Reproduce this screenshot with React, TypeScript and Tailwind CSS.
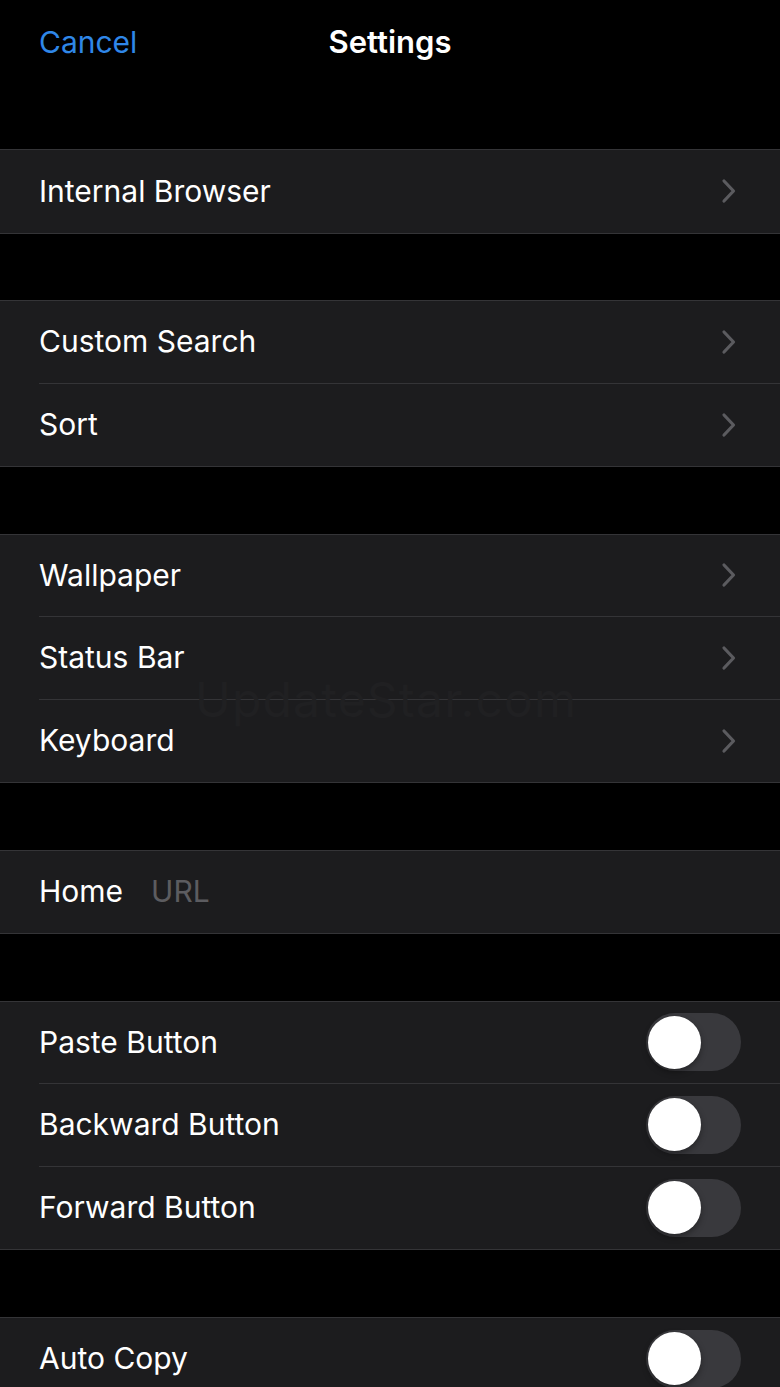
import React from "react";

type Row =
  | { kind: "link"; label: string }
  | { kind: "toggle"; label: string }
  | { kind: "input"; label: string; placeholder: string };

const GROUPS: Row[][] = [
  [{ kind: "link", label: "Internal Browser" }],
  [
    { kind: "link", label: "Custom Search" },
    { kind: "link", label: "Sort" },
  ],
  [
    { kind: "link", label: "Wallpaper" },
    { kind: "link", label: "Status Bar" },
    { kind: "link", label: "Keyboard" },
  ],
  [{ kind: "input", label: "Home", placeholder: "URL" }],
  [
    { kind: "toggle", label: "Paste Button" },
    { kind: "toggle", label: "Backward Button" },
    { kind: "toggle", label: "Forward Button" },
  ],
  [{ kind: "toggle", label: "Auto Copy" }],
];

function Chevron() {
  return (
    <svg width="16" height="26" viewBox="0 0 16 26" fill="none" className="shrink-0">
      <path
        d="M3 3 L12.5 13 L3 23"
        stroke="#5b5b5f"
        strokeWidth="3.2"
        strokeLinecap="round"
        strokeLinejoin="round"
      />
    </svg>
  );
}

function Toggle() {
  return (
    <div className="flex h-[58px] w-[95px] shrink-0 items-center rounded-full bg-[#39393d] pl-[2px]">
      <div className="h-[53px] w-[53px] rounded-full bg-white shadow-[0_3px_6px_rgba(0,0,0,0.35)]" />
    </div>
  );
}

function SettingsRow({ row, last }: { row: Row; last: boolean }) {
  return (
    <div className="flex h-[82.5px] pl-[39px]">
      <div
        className={
          "flex flex-1 items-center pr-[39px] " + (last ? "" : "border-b border-[#343437]")
        }
      >
        <span className="text-[30px] text-white">{row.label}</span>
        {row.kind === "input" && (
          <span className="ml-[28px] text-[30px] text-[#5c5c60]">{row.placeholder}</span>
        )}
        <div className="flex-1" />
        {row.kind === "link" && <div className="mr-[4px]"><Chevron /></div>}
        {row.kind === "toggle" && <Toggle />}
      </div>
    </div>
  );
}

export default function App() {
  return (
    <div
      className="relative h-[1387px] w-[780px] overflow-hidden bg-black"
      style={{ fontFamily: "Inter, 'Liberation Sans', sans-serif" }}
    >
      <div className="relative flex h-[84px] items-center px-[39px]">
        <span className="text-[30px] text-[#2f87e8]">Cancel</span>
        <span className="absolute left-1/2 -translate-x-1/2 text-[31px] font-semibold text-white">
          Settings
        </span>
      </div>
      <div className="flex flex-col gap-[66.5px] pt-[65px]">
        {GROUPS.map((group, gi) => (
          <div key={gi} className="border-y border-[#343437] bg-[#1c1c1e]">
            {group.map((row, ri) => (
              <SettingsRow key={row.label} row={row} last={ri === group.length - 1} />
            ))}
          </div>
        ))}
      </div>
      <div className="pointer-events-none absolute left-[195px] top-[664px] text-[48px] tracking-wide text-[#202022]">
        UpdateStar.com
      </div>
    </div>
  );
}
